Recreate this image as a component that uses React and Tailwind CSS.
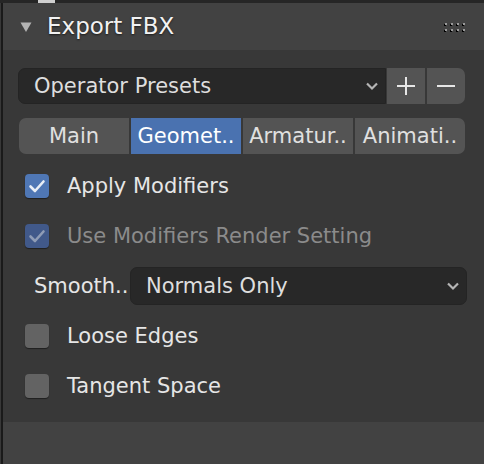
import React from "react";

const font = { fontFamily: '"DejaVu Sans", "Liberation Sans", sans-serif' };

function Check({ dim }) {
  return (
    <svg width="24" height="24" viewBox="0 0 24 24" className="block">
      <path
        d="M5.5 12.5 L10 17 L18.5 7.5"
        fill="none"
        stroke={dim ? "#a9b3c4" : "#e8eef6"}
        strokeWidth="2.6"
        strokeLinecap="round"
        strokeLinejoin="round"
        opacity={dim ? 0.75 : 1}
      />
    </svg>
  );
}

function CheckRow({ label, checked, dim }) {
  return (
    <div className="h-[50px] flex items-center pl-[7px]">
      <div
        className={
          "w-[24px] h-[24px] rounded-[4px] shadow-[0_1px_1px_rgba(0,0,0,0.45)] " +
          (checked
            ? dim
              ? "bg-[#41598a]"
              : "bg-[#4f77b5]"
            : "bg-[#636363]")
        }
      >
        {checked && <Check dim={dim} />}
      </div>
      <span
        className={
          "ml-[18px] text-[21px] leading-none " +
          (dim ? "text-[#8b8b8b]" : "text-[#e6e6e6]")
        }
      >
        {label}
      </span>
    </div>
  );
}

function Chevron() {
  return (
    <svg width="14" height="10" viewBox="0 0 14 10" className="block">
      <path d="M2 2.5 L7 7.5 L12 2.5" fill="none" stroke="#b5b5b5" strokeWidth="2.2" />
    </svg>
  );
}

export default function App() {
  const dots = [0, 1, 2, 3];
  return (
    <div className="w-[484px] h-[464px] bg-[#1d1d1d] flex flex-col overflow-hidden" style={font}>
      {/* top strip remnant of previous panel */}
      <div className="h-[3px] flex bg-[#262626]">
        <div className="w-[38px]" />
        <div className="w-[17px] bg-[#d0d0d0]" />
        <div className="flex-1" />
      </div>
      <div className="flex flex-1">
        <div className="w-[3px] bg-[#1a1a1a] border-l border-[#383838]" />
        <div className="flex-1 flex flex-col">
          {/* header */}
          <div className="h-[47px] bg-[#424242] flex items-center pl-[17px] pr-[19px]">
            <svg width="12" height="12" viewBox="0 0 12 12" className="block">
              <path d="M0.5 1.5 L11.5 1.5 L6 11 Z" fill="#b3b3b3" />
            </svg>
            <span className="ml-[15px] text-[23px] leading-none text-[#f2f2f2] [text-shadow:0_1px_2px_rgba(0,0,0,0.6)]">
              Export FBX
            </span>
            <div className="flex-1" />
            <div className="flex flex-col gap-[4px]">
              {[0, 1].map((r) => (
                <div key={r} className="flex gap-[4px]">
                  {dots.map((d) => (
                    <div key={d} className="w-[2px] h-[2px] bg-[#9a9a9a] shadow-[-1px_1px_0_#000]" />
                  ))}
                </div>
              ))}
            </div>
          </div>
          {/* body */}
          <div className="bg-[#383838] pt-[11px] pb-[11px] pl-[15px] pr-[19px] flex flex-col">
            {/* presets row */}
            <div className="h-[50px] flex items-center">
              <div className="w-[368px] h-[36px] bg-[#282828] rounded-l-[7px] border border-[#242424] flex items-center pl-[15px] pr-[6px]">
                <span className="text-[21px] leading-none text-[#dedede]">Operator Presets</span>
                <div className="flex-1" />
                <Chevron />
              </div>
              <div className="w-[38px] h-[36px] bg-[#545454] ml-[1px] flex items-center justify-center">
                <svg width="20" height="20" viewBox="0 0 20 20" className="block">
                  <path d="M10 1 V19 M1 10 H19" stroke="#e6e6e6" strokeWidth="2" />
                </svg>
              </div>
              <div className="w-[38px] h-[36px] bg-[#545454] ml-[2px] rounded-r-[7px] flex items-center justify-center">
                <svg width="20" height="20" viewBox="0 0 20 20" className="block">
                  <path d="M1 10 H19" stroke="#e6e6e6" strokeWidth="2" />
                </svg>
              </div>
            </div>
            {/* tabs */}
            <div className="h-[50px] flex items-center pl-[1px] gap-[2px]">
              {["Main", "Geomet..", "Armatur..", "Animati.."].map((t, i) => (
                <div
                  key={t}
                  className={
                    "w-[110px] h-[36px] flex items-center justify-center text-[21px] leading-none " +
                    (i === 1 ? "bg-[#4a72b0] text-white" : "bg-[#545454] text-[#e0e0e0]") +
                    (i === 0 ? " rounded-l-[7px]" : "") +
                    (i === 3 ? " rounded-r-[7px]" : "")
                  }
                >
                  {t}
                </div>
              ))}
            </div>
            <CheckRow label="Apply Modifiers" checked />
            <CheckRow label="Use Modifiers Render Setting" checked dim />
            {/* smoothing */}
            <div className="h-[50px] flex items-center">
              <span className="ml-[16px] w-[96px] text-[21px] leading-none text-[#e6e6e6]">Smooth..</span>
              <div className="flex-1 h-[38px] bg-[#282828] rounded-[7px] border border-[#242424] flex items-center pl-[15px] pr-[6px] -mr-[2px]">
                <span className="text-[21px] leading-none text-[#dedede]">Normals Only</span>
                <div className="flex-1" />
                <Chevron />
              </div>
            </div>
            <CheckRow label="Loose Edges" />
            <CheckRow label="Tangent Space" />
          </div>
          <div className="flex-1 bg-[#424242]" />
        </div>
      </div>
    </div>
  );
}
